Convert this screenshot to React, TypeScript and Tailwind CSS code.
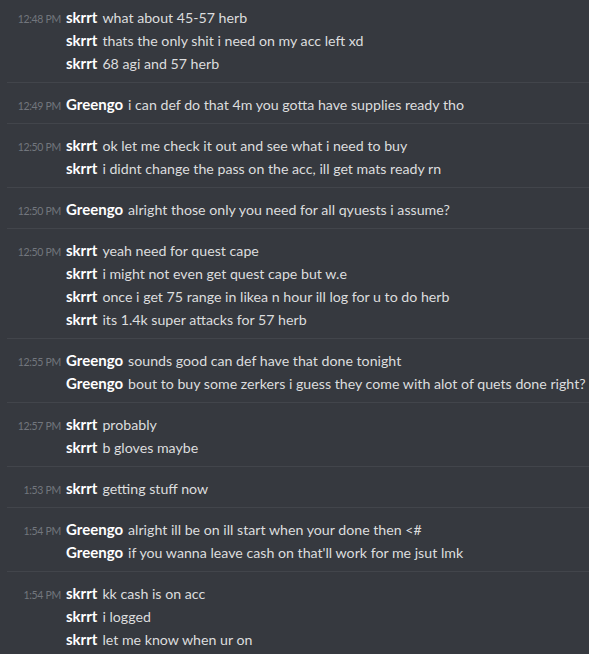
const groups: { time: string; user: string; lines: string[] }[] = [
  { time: "12:48 PM", user: "skrrt", lines: ["what about 45-57 herb", "thats the only shit i need on my acc left xd", "68 agi and 57 herb"] },
  { time: "12:49 PM", user: "Greengo", lines: ["i can def do that 4m you gotta have supplies ready tho"] },
  { time: "12:50 PM", user: "skrrt", lines: ["ok let me check it out and see what i need to buy", "i didnt change the pass on the acc, ill get mats ready rn"] },
  { time: "12:50 PM", user: "Greengo", lines: ["alright those only you need for all qyuests i assume?"] },
  {
    time: "12:50 PM",
    user: "skrrt",
    lines: [
      "yeah need for quest cape",
      "i might not even get quest cape but w.e",
      "once i get 75 range in likea n hour ill log for u to do herb",
      "its 1.4k super attacks for 57 herb",
    ],
  },
  { time: "12:55 PM", user: "Greengo", lines: ["sounds good can def have that done tonight", "bout to buy some zerkers i guess they come with alot of quets done right?"] },
  { time: "12:57 PM", user: "skrrt", lines: ["probably", "b gloves maybe"] },
  { time: "1:53 PM", user: "skrrt", lines: ["getting stuff now"] },
  { time: "1:54 PM", user: "Greengo", lines: ["alright ill be on ill start when your done then <#", "if you wanna leave cash on that'll work for me jsut lmk"] },
  { time: "1:54 PM", user: "skrrt", lines: ["kk cash is on acc", "i logged", "let me know when ur on"] },
];

export default function App() {
  return (
    <div className="w-[589px] h-[654px] overflow-hidden bg-[#36393f] font-['Lato',sans-serif]">
      {groups.map((g, gi) => (
        <div
          key={gi}
          className={
            gi === 0
              ? "ml-[7px] pt-[5px] pb-[8px] border-b border-[#42454b]"
              : gi === groups.length - 1
              ? "ml-[7px] pt-[9px]"
              : "ml-[7px] pt-[9px] pb-[8px] border-b border-[#42454b]"
          }
        >
          {g.lines.map((line, li) => (
            <div key={li} className="h-[23px] leading-[23px] whitespace-nowrap">
              <span className="inline-block w-[54px] text-right text-[10.5px] text-[#72767d] tracking-[-0.3px]">
                {li === 0 ? g.time : ""}
              </span>
              <span className="ml-[5px] text-[15px] font-bold text-white">{g.user}</span>
              <span className="ml-[5px] text-[14.2px] text-[#dcddde]">{line}</span>
            </div>
          ))}
        </div>
      ))}
    </div>
  );
}
